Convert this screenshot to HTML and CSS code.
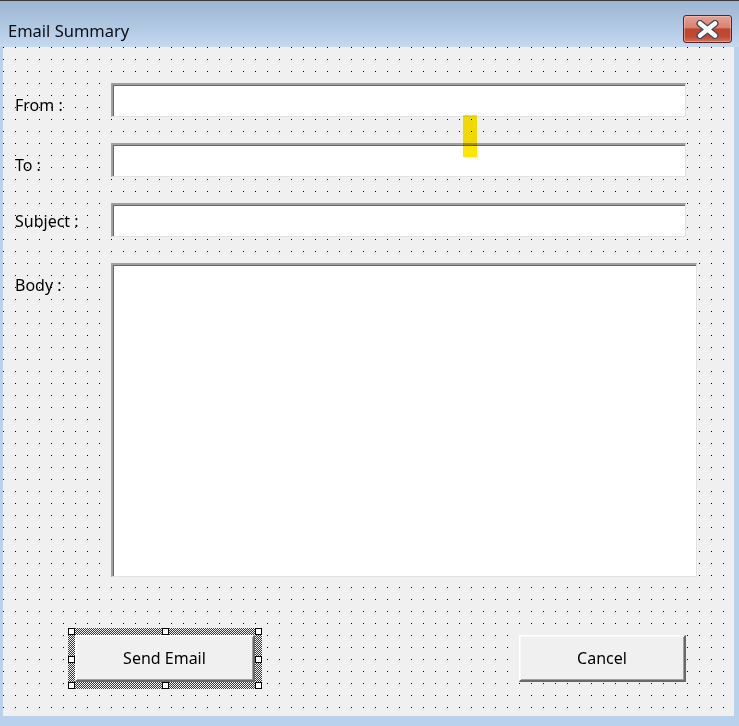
FILE: index.html
```html
<!DOCTYPE html>
<html>
<head>
<meta charset="utf-8">
<link rel="stylesheet" href="styles.css">
</head>
<body>
<div class="window">
  <div class="titlebar">
    <div class="title">Email Summary</div>
    <div class="close">
      <svg width="23" height="19" viewBox="0 0 23 19">
        <path d="M4 3.5 L19 15.5 M19 3.5 L4 15.5" stroke="#3d4a5c" stroke-width="7" stroke-linecap="round" fill="none"/>
        <path d="M4 3.5 L19 15.5 M19 3.5 L4 15.5" stroke="#ffffff" stroke-width="4.5" stroke-linecap="round" fill="none"/>
      </svg>
    </div>
  </div>
  <div class="client">
    <div class="fields">
      <div class="row">
        <div class="label">From :</div>
        <div class="textbox"></div>
      </div>
      <div class="row">
        <div class="label">To :</div>
        <div class="textbox"></div>
      </div>
      <div class="row">
        <div class="label label-high">Subject :</div>
        <div class="textbox"></div>
      </div>
      <div class="row">
        <div class="label">Body :</div>
        <div class="textbox textbox-body"></div>
      </div>
    </div>
    <div class="buttons">
      <div class="selection">
        <div class="btn btn-send">Send Email</div>
        <span class="handle h-tl"></span>
        <span class="handle h-tm"></span>
        <span class="handle h-tr"></span>
        <span class="handle h-ml"></span>
        <span class="handle h-mr"></span>
        <span class="handle h-bl"></span>
        <span class="handle h-bm"></span>
        <span class="handle h-br"></span>
      </div>
      <div class="btn btn-cancel">Cancel</div>
    </div>
    <div class="highlight"></div>
  </div>
</div>
</body>
</html>
```
FILE: styles.css
```css
html, body {
  margin: 0;
  padding: 0;
  overflow: hidden;
}

body {
  font-family: "Noto Sans", "Open Sans", sans-serif;
  color: #000;
}

.window {
  width: 739px;
  height: 726px;
  display: flex;
  flex-direction: column;
  background: #b9d1ea;
  box-sizing: border-box;
}

.titlebar {
  height: 47px;
  flex: none;
  display: flex;
  justify-content: space-between;
  align-items: flex-start;
  box-sizing: border-box;
  border-top: 1px solid #3b3b3b;
  background: linear-gradient(#9cb5d2, #b3cae4 60%, #c5d9ef);
  padding: 0 7px 0 8px;
}

.title {
  margin-top: 20px;
  font-size: 16.5px;
  line-height: 20px;
  color: #0c0c14;
}

.close {
  margin-top: 14px;
  width: 47px;
  height: 26px;
  border: 1px solid #5a2424;
  border-radius: 3px;
  background: linear-gradient(#e7a294 0%, #d8806f 45%, #c2432d 50%, #c14a34 80%, #cf7463 100%);
  box-shadow: inset 0 0 0 1px rgba(255, 210, 200, 0.45);
  display: flex;
  align-items: center;
  justify-content: center;
}

.close svg {
  display: block;
}

.client {
  position: relative;
  flex: 1;
  margin: 0 5px 10px 3px;
  background-color: #f0f0f0;
  background-image: conic-gradient(from 270deg at 1px 1px, #000 25%, transparent 0);
  background-size: 12px 12px;
  padding: 36px 0 0 12px;
  box-sizing: border-box;
}

.fields {
  display: flex;
  flex-direction: column;
  gap: 26px;
}

.row {
  display: flex;
  align-items: flex-start;
}

.label {
  width: 96px;
  flex: none;
  font-size: 16px;
  line-height: 18px;
  padding-top: 13px;
}

.label-high {
  padding-top: 9px;
}

.textbox {
  width: 575px;
  height: 34px;
  box-sizing: border-box;
  background: #fff;
  border-style: solid;
  border-width: 2px 1px 1px 2px;
  border-color: #a0a0a0 #e3e3e3 #e3e3e3 #a0a0a0;
  box-shadow: inset 1px 1px 0 #696969;
}

.textbox-body {
  width: 586px;
  height: 314px;
}

.buttons {
  display: flex;
  justify-content: space-between;
  align-items: flex-start;
  margin-top: 51px;
  padding: 0 48px 0 53px;
}

.selection {
  position: relative;
  padding: 7px;
  background-color: #c8c8c8;
  background-image: repeating-conic-gradient(#3a3a3a 0 25%, #f0f0f0 0 50%);
  background-size: 2px 2px;
}

.btn {
  height: 47px;
  box-sizing: border-box;
  background: #f0f0f0;
  border-style: solid;
  border-width: 1px 2px 2px 1px;
  border-color: #ffffff #6a6a6a #6a6a6a #ffffff;
  box-shadow: inset 1px 1px 0 #f8f8f8, inset -1px -1px 0 #a0a0a0;
  display: flex;
  align-items: center;
  justify-content: center;
  font-size: 16px;
  line-height: 18px;
}

.btn-send {
  width: 180px;
}

.btn-cancel {
  width: 167px;
  margin-top: 7px;
}

.handle {
  position: absolute;
  width: 7px;
  height: 7px;
  box-sizing: border-box;
  background: #fff;
  border: 1px solid #000;
}

.h-tl { left: 0; top: 0; }
.h-tm { left: calc(50% - 3px); top: 0; }
.h-tr { right: 0; top: 0; }
.h-ml { left: 0; top: calc(50% - 3px); }
.h-mr { right: 0; top: calc(50% - 3px); }
.h-bl { left: 0; bottom: 0; }
.h-bm { left: calc(50% - 3px); bottom: 0; }
.h-br { right: 0; bottom: 0; }

.highlight {
  position: absolute;
  left: 460px;
  top: 68px;
  width: 14px;
  height: 42px;
  background: #ffe600;
  mix-blend-mode: multiply;
}
```
